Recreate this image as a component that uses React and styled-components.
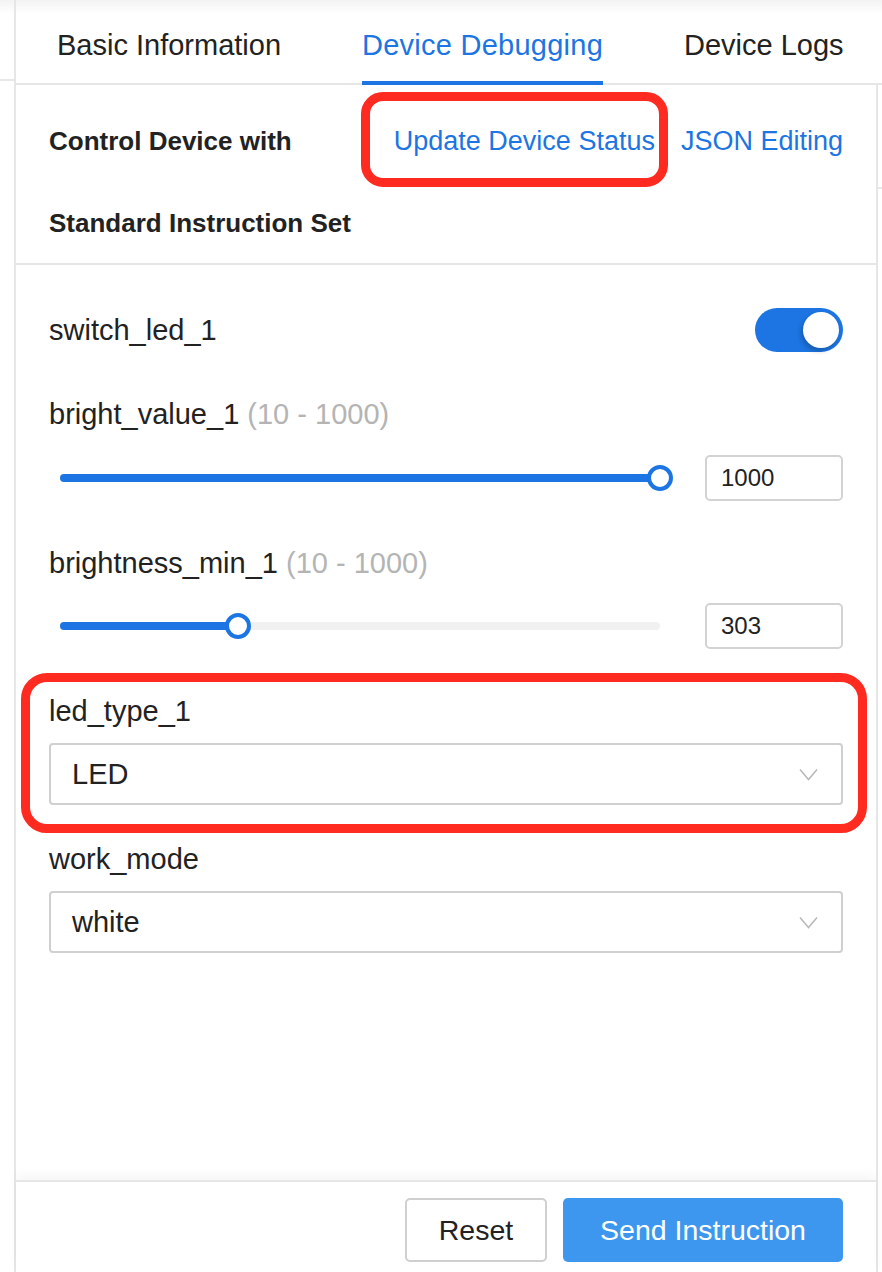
import React from 'react';
import styled, { createGlobalStyle } from 'styled-components';

const BLUE = '#1c75e2';
const LINE = '#e6e6e6';

const GlobalStyle = createGlobalStyle`
  html, body { margin: 0; padding: 0; background: #fff; }
  body {
    font-family: "Liberation Sans", Arial, Helvetica, sans-serif;
    color: #222;
    -webkit-font-smoothing: antialiased;
  }
  * { box-sizing: border-box; }
`;

const Page = styled.div`
  width: 882px;
  height: 1272px;
  overflow: hidden;
  display: flex;
  background: linear-gradient(#f3f3f3 0px, #ffffff 14px);
`;

const Gutter = styled.div`
  width: ${p => p.$w}px;
  flex: ${p => (p.$grow ? '1' : 'none')};
`;

const GutterRule = styled.div`
  height: ${p => p.$top}px;
  border-bottom: 2px solid #e8e8e8;
`;

const Main = styled.div`
  width: 868px;
  flex: none;
  border-left: 2px solid ${LINE};
  display: flex;
  flex-direction: column;
`;

const TabBar = styled.div`
  height: 85px;
  flex: none;
  display: flex;
  gap: 81px;
  padding-left: 41px;
  border-bottom: 2px solid ${LINE};
`;

const Tab = styled.div`
  display: flex;
  align-items: center;
  padding-top: 9px;
  margin-bottom: -2px;
  border-bottom: 4px solid ${p => (p.$active ? BLUE : 'transparent')};
  font-size: 29px;
  letter-spacing: ${p => (p.$active ? '0.25px' : '0')};
  color: ${p => (p.$active ? BLUE : '#222')};
  white-space: nowrap;
`;

const Body = styled.div`
  flex: 1;
  display: flex;
  min-height: 0;
`;

const Panel = styled.div`
  width: 862px;
  flex: none;
  border-right: 2px solid ${LINE};
  display: flex;
  flex-direction: column;
`;

const Header = styled.div`
  flex: none;
  padding: 28px 33px 12px 33px;
  border-bottom: 2px solid ${LINE};
  display: flex;
  flex-direction: column;
  gap: 26px;
`;

const HeaderRow = styled.div`
  height: 56px;
  display: flex;
  align-items: center;
  justify-content: space-between;
`;

const StrongLabel = styled.div`
  font-size: 26px;
  font-weight: 700;
  color: #222;
  white-space: nowrap;
`;

const ModeGroup = styled.div`
  display: flex;
  gap: 26px;
  height: 100%;
`;

const ModeItem = styled.div`
  position: relative;
  display: flex;
  align-items: center;
  font-size: 27px;
  color: ${BLUE};
  white-space: nowrap;
`;

const Highlight = styled.div`
  position: absolute;
  left: ${p => p.$l}px;
  right: ${p => p.$r}px;
  top: ${p => p.$t}px;
  bottom: ${p => p.$b}px;
  border: 9px solid #ff2a20;
  border-radius: ${p => p.$radius}px;
  pointer-events: none;
`;

const Content = styled.div`
  flex: 1;
  padding: 42px 33px 0 33px;
  display: flex;
  flex-direction: column;
`;

const SwitchRow = styled.div`
  height: 46px;
  display: flex;
  align-items: center;
  justify-content: space-between;
`;

const Label = styled.div`
  height: 40px;
  line-height: 40px;
  font-size: 29px;
  color: #222;
  margin-top: ${p => p.$mt || 0}px;
  margin-bottom: ${p => p.$mb || 0}px;
  white-space: nowrap;
`;

const Range = styled.span`
  color: #b4b4b4;
`;

const Toggle = styled.div`
  width: 88px;
  height: 44px;
  border-radius: 22px;
  background: ${BLUE};
  display: flex;
  align-items: center;
  justify-content: flex-end;
  padding-right: 4px;
`;

const Knob = styled.div`
  width: 36px;
  height: 36px;
  border-radius: 50%;
  background: #fff;
  box-shadow: -2px 3px 5px rgba(0, 0, 0, 0.22);
`;

const SliderRow = styled.div`
  height: 46px;
  display: flex;
  align-items: center;
  gap: 34px;
`;

const SliderBox = styled.div`
  flex: 1;
  height: 26px;
  padding: 0 11px;
  display: flex;
  align-items: center;
`;

const Rail = styled.div`
  position: relative;
  width: 100%;
  height: 8px;
  border-radius: 4px;
  background: #f1f1f1;
`;

const Fill = styled.div`
  position: absolute;
  left: 0;
  top: 0;
  bottom: 0;
  border-radius: 4px;
  background: ${BLUE};
`;

const Handle = styled.div`
  position: absolute;
  top: 50%;
  width: 26px;
  height: 26px;
  border-radius: 50%;
  border: 4px solid ${BLUE};
  background: #fff;
  transform: translate(-50%, -50%);
`;

const NumberBox = styled.div`
  width: 138px;
  height: 46px;
  flex: none;
  border: 2px solid #d3d3d3;
  border-radius: 5px;
  padding-left: 14px;
  display: flex;
  align-items: center;
  font-size: 24px;
  color: #222;
`;

const FieldGroup = styled.div`
  position: relative;
  display: flex;
  flex-direction: column;
`;

const Select = styled.div`
  height: 62px;
  border: 2px solid #d0d0d0;
  border-radius: 4px;
  padding: 0 23px 0 21px;
  display: flex;
  align-items: center;
  justify-content: space-between;
  font-size: 29px;
  color: #222;
`;

const Footer = styled.div`
  height: 92px;
  flex: none;
  border-top: 2px solid ${LINE};
  box-shadow: 0 -6px 10px rgba(0, 0, 0, 0.035);
  padding: 16px 33px 10px 33px;
  display: flex;
  justify-content: flex-end;
  gap: 16px;
`;

const Button = styled.button`
  height: 64px;
  width: ${p => p.$w}px;
  border-radius: 5px;
  font-family: inherit;
  font-size: 28.5px;
  padding: 0;
  border: ${p => (p.$primary ? 'none' : '2px solid #cfcfcf')};
  background: ${p => (p.$primary ? '#3e97ef' : '#fff')};
  color: ${p => (p.$primary ? '#fff' : '#222')};
`;

const Chevron = () => (
  <svg width="19" height="13" viewBox="0 0 19 13" fill="none">
    <polyline points="1,1.5 9.5,11.5 18,1.5" stroke="#b8b8b8" strokeWidth="1.5" />
  </svg>
);

const Slider = ({ value, min, max }) => {
  const pct = ((value - min) / (max - min)) * 100;
  return (
    <SliderBox>
      <Rail>
        <Fill style={{ width: `${pct}%` }} />
        <Handle style={{ left: `${pct}%` }} />
      </Rail>
    </SliderBox>
  );
};

export default function App() {
  return (
    <>
      <GlobalStyle />
      <Page>
        <Gutter $w={14}>
          <GutterRule $top={81} />
        </Gutter>
        <Main>
          <TabBar>
            <Tab>Basic Information</Tab>
            <Tab $active>Device Debugging</Tab>
            <Tab>Device Logs</Tab>
          </TabBar>
          <Body>
            <Panel>
              <Header>
                <HeaderRow>
                  <StrongLabel>Control Device with</StrongLabel>
                  <ModeGroup>
                    <ModeItem>
                      Update Device Status
                      <Highlight $l={-33} $r={-13} $t={-21} $b={-18} $radius={22} />
                    </ModeItem>
                    <ModeItem>JSON Editing</ModeItem>
                  </ModeGroup>
                </HeaderRow>
                <HeaderRow>
                  <StrongLabel>Standard Instruction Set</StrongLabel>
                </HeaderRow>
              </Header>
              <Content>
                <SwitchRow>
                  <Label>switch_led_1</Label>
                  <Toggle>
                    <Knob />
                  </Toggle>
                </SwitchRow>

                <Label $mt={41} $mb={21}>
                  bright_value_1 <Range>(10 - 1000)</Range>
                </Label>
                <SliderRow>
                  <Slider value={1000} min={10} max={1000} />
                  <NumberBox>1000</NumberBox>
                </SliderRow>

                <Label $mt={42} $mb={20}>
                  brightness_min_1 <Range>(10 - 1000)</Range>
                </Label>
                <SliderRow>
                  <Slider value={303} min={10} max={1000} />
                  <NumberBox>303</NumberBox>
                </SliderRow>

                <FieldGroup>
                  <Label $mt={42} $mb={12}>led_type_1</Label>
                  <Select>
                    LED
                    <Chevron />
                  </Select>
                  <Highlight $l={-28} $r={-24} $t={24} $b={-28} $radius={26} />
                </FieldGroup>

                <Label $mt={34} $mb={12}>work_mode</Label>
                <Select>
                  white
                  <Chevron />
                </Select>
              </Content>
              <Footer>
                <Button $w={142}>Reset</Button>
                <Button $w={280} $primary>Send Instruction</Button>
              </Footer>
            </Panel>
            <Gutter $grow>
              <GutterRule $top={104} />
            </Gutter>
          </Body>
        </Main>
      </Page>
    </>
  );
}
